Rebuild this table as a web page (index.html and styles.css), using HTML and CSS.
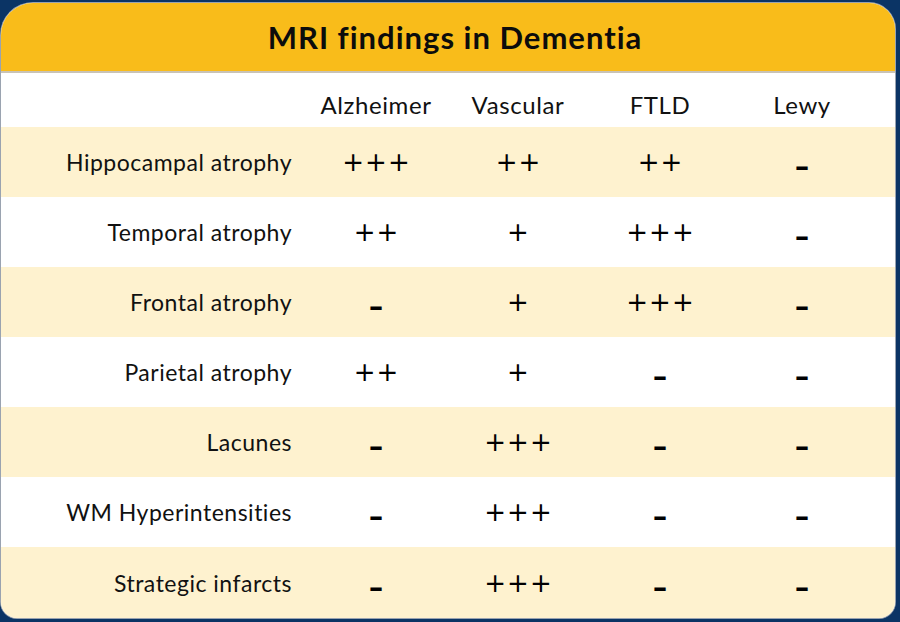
FILE: index.html
```html
<!DOCTYPE html>
<html lang="en">
<head>
<meta charset="utf-8">
<title>MRI findings in Dementia</title>
<link rel="stylesheet" href="styles.css">
</head>
<body>
<div class="card">
  <div class="title">MRI findings in Dementia</div>
  <div class="row head">
    <div class="label"></div>
    <div class="cell">Alzheimer</div>
    <div class="cell">Vascular</div>
    <div class="cell">FTLD</div>
    <div class="cell">Lewy</div>
  </div>
  <div class="row alt">
    <div class="label">Hippocampal atrophy</div>
    <div class="cell"><span class="plus">+++</span></div>
    <div class="cell"><span class="plus">++</span></div>
    <div class="cell"><span class="plus">++</span></div>
    <div class="cell"><span class="minus">–</span></div>
  </div>
  <div class="row">
    <div class="label">Temporal atrophy</div>
    <div class="cell"><span class="plus">++</span></div>
    <div class="cell"><span class="plus">+</span></div>
    <div class="cell"><span class="plus">+++</span></div>
    <div class="cell"><span class="minus">–</span></div>
  </div>
  <div class="row alt">
    <div class="label">Frontal atrophy</div>
    <div class="cell"><span class="minus">–</span></div>
    <div class="cell"><span class="plus">+</span></div>
    <div class="cell"><span class="plus">+++</span></div>
    <div class="cell"><span class="minus">–</span></div>
  </div>
  <div class="row">
    <div class="label">Parietal atrophy</div>
    <div class="cell"><span class="plus">++</span></div>
    <div class="cell"><span class="plus">+</span></div>
    <div class="cell"><span class="minus">–</span></div>
    <div class="cell"><span class="minus">–</span></div>
  </div>
  <div class="row alt">
    <div class="label">Lacunes</div>
    <div class="cell"><span class="minus">–</span></div>
    <div class="cell"><span class="plus">+++</span></div>
    <div class="cell"><span class="minus">–</span></div>
    <div class="cell"><span class="minus">–</span></div>
  </div>
  <div class="row">
    <div class="label">WM Hyperintensities</div>
    <div class="cell"><span class="minus">–</span></div>
    <div class="cell"><span class="plus">+++</span></div>
    <div class="cell"><span class="minus">–</span></div>
    <div class="cell"><span class="minus">–</span></div>
  </div>
  <div class="row alt last">
    <div class="label">Strategic infarcts</div>
    <div class="cell"><span class="minus">–</span></div>
    <div class="cell"><span class="plus">+++</span></div>
    <div class="cell"><span class="minus">–</span></div>
    <div class="cell"><span class="minus">–</span></div>
  </div>
</div>
</body>
</html>
```

FILE: styles.css
```css
html, body {
  margin: 0;
  padding: 0;
}
body {
  background: #0b3465;
  width: 900px;
  height: 622px;
  overflow: hidden;
  font-family: Lato, "Open Sans", sans-serif;
  font-variant-ligatures: none;
  color: #111;
}
.card {
  margin: 3px 5px 0 1px;
  height: 615px;
  background: #fff;
  border-radius: 32px 26px 16px 16px;
  overflow: hidden;
  display: flex;
  flex-direction: column;
  box-shadow: 0 0 0 1px #9aa3b0;
}
.title {
  height: 68px;
  background: #f9bc1a;
  border-bottom: 2px solid #c9c3b6;
  display: flex;
  align-items: center;
  justify-content: center;
  font-weight: 700;
  font-size: 31px;
  letter-spacing: 1px;
  color: #0c0c0c;
  padding-left: 14px;
}
.row {
  display: grid;
  grid-template-columns: 304px repeat(4, 142px);
  height: 70px;
  align-items: center;
}
.row.head {
  height: 54px;
  padding-top: 10px;
  box-sizing: border-box;
}
.row.alt {
  background: #fef2cf;
}
.row.last {
  flex: 1;
}
.label {
  text-align: right;
  padding-right: 13px;
  font-size: 23px;
  letter-spacing: 0.5px;
}
.cell {
  text-align: center;
  font-size: 24px;
  letter-spacing: 0.6px;
  line-height: 1;
}
.plus {
  display: inline-block;
  font-family: "DejaVu Sans", sans-serif;
  font-size: 26px;
  font-weight: 400;
  letter-spacing: 1px;
  padding-left: 1px;
  line-height: 1;
  color: #000;
}
.minus {
  display: inline-block;
  font-size: 24px;
  font-weight: 900;
  line-height: 1;
  color: #000;
  transform: translateY(3px) scale(1.15, 1.5);
}
```
